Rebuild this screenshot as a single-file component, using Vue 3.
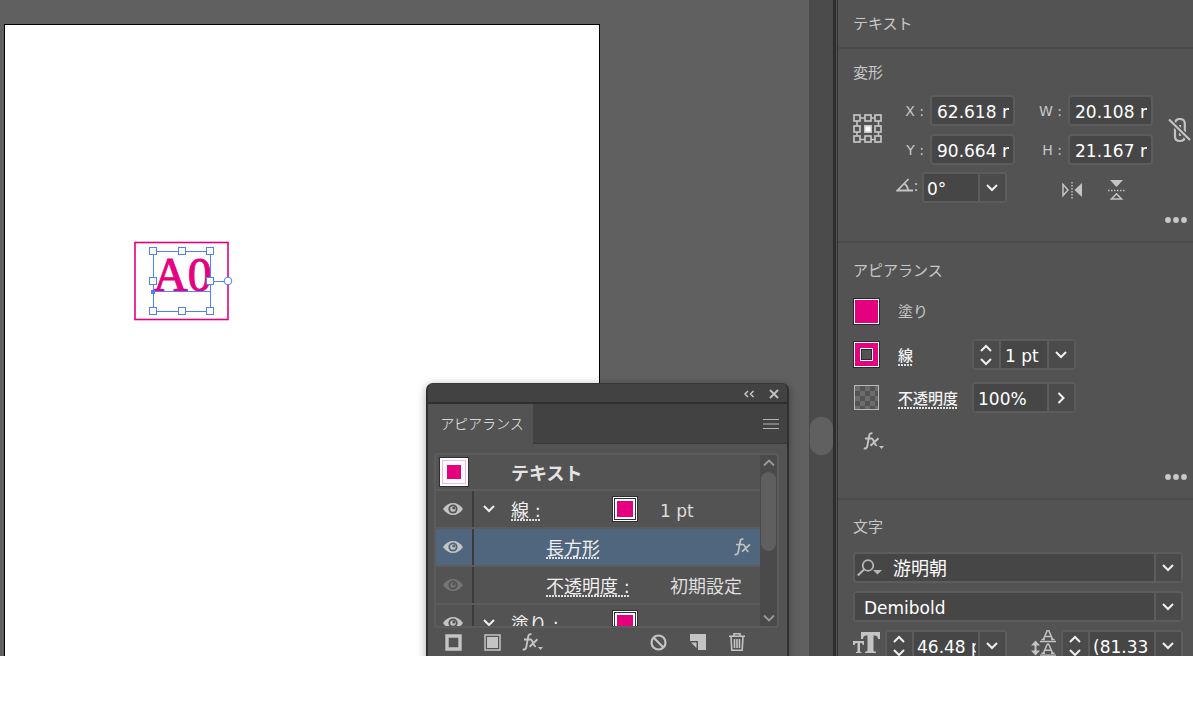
<script setup>
import { ref } from 'vue'

const posX = ref('62.618 mm')
const posY = ref('90.664 mm')
const sizeW = ref('20.108 mm')
const sizeH = ref('21.167 mm')
const angle = ref('0°')
const strokeWidth = ref('1 pt')
const opacity = ref('100%')
const fontFamily = ref('游明朝')
const fontStyle = ref('Demibold')
const fontSize = ref('46.48 pt')
const leading = ref('(81.33 pt)')

const handles = [
  [23, 11], [52, 11], [80, 11],
  [23, 41], [80, 41],
  [23, 71], [52, 71], [80, 71],
]

const anchors = [
  [1, 1], [12, 1], [22, 1],
  [1, 12], [22, 12],
  [1, 22], [12, 22], [22, 22],
]

const rows = [
  { id: 'stroke', eye: true, open: true, label: '線 :', swatch: true, value: '1 pt' },
  { id: 'rect', eye: true, nested: true, label: '長方形', selected: true, fx: true },
  { id: 'opacity', eye: true, dim: true, nested: true, label: '不透明度 :', value: '初期設定' },
  { id: 'fill', eye: true, open: true, label: '塗り :', swatch: true, plain: true },
]
</script>

<template>
  <div class="app">
    <main class="workspace">
      <div class="artboard"></div>
      <svg class="artwork" width="106" height="84" viewBox="0 0 106 84">
        <rect x="5" y="2.5" width="93" height="77" fill="none" stroke="#e4007f" stroke-width="1.6" />
        <text class="art-text" x="23" y="51">A0</text>
        <g fill="none" stroke="#4f80ff">
          <path d="M23.5 11.5H80.5V71.5H23.5Z" />
          <path d="M23 51.5H80M80 41.5H94" />
        </g>
        <rect x="21" y="50" width="4" height="4" fill="#4f80ff" />
        <rect
          v-for="h in handles"
          :key="h.join()"
          :x="h[0] - 3.5"
          :y="h[1] - 3.5"
          width="7"
          height="7"
          fill="#fff"
          stroke="#4f80ff"
        />
        <circle cx="98" cy="41" r="3.8" fill="#fff" stroke="#4f80ff" />
      </svg>

      <section class="float">
        <header class="float-bar">
          <button class="plain" aria-label="アイコン化">
            <svg width="12" height="10" viewBox="0 0 12 10" fill="none" stroke="#c8c8c8" stroke-width="1.5"><path d="M5 2 2 5l3 3M10.500 2l-3 3 3 3" /></svg>
          </button>
          <button class="plain" aria-label="閉じる">
            <svg width="10" height="10" viewBox="0 0 10 10" fill="none" stroke="#c0c0c0" stroke-width="2"><path d="M1 1l8 8M9 1 1 9" /></svg>
          </button>
        </header>
        <div class="tabs">
          <button class="tab">アピアランス</button>
          <button class="plain" aria-label="メニュー">
            <svg width="16" height="12" viewBox="0 0 16 12" stroke="#b4b4b4" stroke-width="1.2"><path d="M0 1.500h16M0 6h16M0 10.500h16" /></svg>
          </button>
        </div>
        <div class="list">
          <div class="rows">
            <div class="row head">
              <span class="thumb"><i></i></span>
              <span class="head-title">テキスト</span>
            </div>
            <div v-for="r in rows" :key="r.id" class="row" :class="{ selected: r.selected }">
              <button class="plain eye" aria-label="表示">
                <svg width="20" height="12" viewBox="0 0 20 12" :class="{ dim: r.dim }">
                  <path d="M0 6C3 1.800 6.300 0 10 0s7 1.800 10 6c-3 4.200-6.300 6-10 6S3 10.200 0 6Z" fill="#c4c4c4" />
                  <circle cx="10" cy="6" r="4.600" class="iris" />
                  <circle cx="10" cy="6" r="2.800" fill="#c4c4c4" />
                  <circle cx="10.800" cy="5.200" r="1.400" class="iris" />
                </svg>
              </button>
              <div class="cell" :class="{ nested: r.nested }">
                <button v-if="r.open" class="plain twist" aria-label="展開">
                  <svg width="12" height="8" viewBox="0 0 12 8" fill="none" stroke="#f0f0f0" stroke-width="2"><path d="M1 1l5 5 5-5" /></svg>
                </button>
                <a href="#" class="name" :class="{ dotted: !r.plain }">{{ r.label }}</a>
                <span v-if="r.swatch" class="mini"><i></i></span>
                <span v-if="r.value" class="value" :class="{ wide: r.nested }">{{ r.value }}</span>
                <svg v-if="r.fx" class="row-fx" width="18" height="20" viewBox="0 0 18 20" fill="none" stroke="#c4c4c4" stroke-width="1.700">
                  <path d="M10.500 2.300C8.800 1.500 7.600 2.300 7.200 4.500L5.300 15c-.4 2-1.400 2.900-3.600 2.400M3 7.500h7M10 7.500c2.400-.4 2.600 7.500 5.500 6.800M17 7.300 9 14.700" />
                </svg>
              </div>
            </div>
          </div>
          <div class="scroll">
            <svg width="12" height="8" viewBox="0 0 12 8" fill="none" stroke="#999" stroke-width="1.800"><path d="M1 6.500l5-5 5 5" /></svg>
            <i class="scroll-thumb"></i>
            <svg width="12" height="8" viewBox="0 0 12 8" fill="none" stroke="#999" stroke-width="1.800"><path d="M1 1.500l5 5 5-5" /></svg>
          </div>
        </div>
        <footer class="tools">
          <div class="tool-group">
            <button class="plain" aria-label="新規線を追加">
              <svg width="17" height="17" viewBox="0 0 17 17" fill="none" stroke="#c4c4c4" stroke-width="3.400"><path d="M2 2h13v13H2z" /></svg>
            </button>
            <button class="plain" aria-label="新規塗りを追加">
              <svg width="17" height="17" viewBox="0 0 17 17"><path d="M1 1h15v15H1z" fill="none" stroke="#c4c4c4" stroke-width="1.500" /><path d="M3 3h11v11H3z" fill="#c4c4c4" /></svg>
            </button>
            <button class="plain" aria-label="新規効果を追加">
              <svg width="22" height="18" viewBox="2 0 22 18" fill="none" stroke="#c4c4c4" stroke-width="1.900" overflow="visible"><path d="M10.500 1.500C8.800.700 7.600 1.500 7.200 3.700L5.300 14c-.4 2-1.400 2.900-3.600 2.400M3 6.500h7M9.500 6.500c2.400-.4 2.600 7.500 5.500 6.800M16.500 6.300l-8 7.400" /><path d="M17 14h5l-2.500 3z" fill="#c4c4c4" stroke="none" /></svg>
            </button>
          </div>
          <div class="tool-group end">
            <button class="plain" aria-label="アピアランスを消去">
              <svg width="17" height="17" viewBox="0 0 17 17" fill="none" stroke="#c4c4c4" stroke-width="2.200"><circle cx="8.500" cy="8.500" r="7" /><path d="M3.500 3.500l10 10" /></svg>
            </button>
            <button class="plain" aria-label="複製">
              <svg width="16" height="16" viewBox="0 0 16 16" fill="#c4c4c4"><path d="M0 0h16v16H8V7H0z" /><path d="M1 8.500h5.500V14z" /></svg>
            </button>
            <button class="plain" aria-label="削除">
              <svg width="16" height="18" viewBox="0 0 16 18" fill="none" stroke="#c4c4c4" stroke-width="1.600"><path d="M0 3.200h16M5 3V.8h6V3M2 3.500l.8 13.700h10.400L14 3.500M5.500 6v9M8 6v9M10.500 6v9" /></svg>
            </button>
          </div>
        </footer>
      </section>
    </main>

    <div class="gutter"><i class="gutter-thumb"></i></div>

    <aside class="props">
      <section class="sec kind"><h2>テキスト</h2></section>

      <section class="sec transform">
        <h2>変形</h2>
        <div class="geometry">
          <svg width="30" height="30" viewBox="0 0 30 30" class="anchor-grid">
            <path d="M4 4h21.500v21.500H4z" fill="none" stroke="#c4c4c4" stroke-width="1.600" />
            <rect v-for="a in anchors" :key="a.join()" :x="a[0]" :y="a[1]" width="6" height="6" fill="#535353" stroke="#c4c4c4" stroke-width="1.700" />
            <path d="M11 11h8v8h-8z" fill="#c4c4c4" />
            <path d="M12.500 12.500h5v5h-5z" fill="#fff" />
          </svg>
          <div class="fields">
            <label for="px">X :</label><input id="px" v-model="posX" class="box" />
            <label for="pw">W :</label><input id="pw" v-model="sizeW" class="box" />
            <label for="py">Y :</label><input id="py" v-model="posY" class="box" />
            <label for="ph">H :</label><input id="ph" v-model="sizeH" class="box" />
          </div>
          <button class="plain link" aria-label="縦横比を固定">
            <svg width="24" height="26" viewBox="0 0 24 26" fill="none" stroke="#c4c4c4" stroke-width="2.200">
              <path d="M7 9V6.500C7 3.500 9 2 11.800 2s5 1.500 5 4.500V15M7 11v8.500c0 3 2 4.500 4.800 4.500s5-1.500 5-4.500V18M12 8v5M12 14v5" />
              <path d="M1 2.500 22 23" stroke="#535353" stroke-width="5" />
              <path d="M1 2.500 22 23" />
            </svg>
          </button>
        </div>
        <div class="angle-row">
          <label for="ang" class="angle-label" aria-label="角度">
            <svg width="18" height="14" viewBox="0 0 18 14" fill="none" stroke="#c4c4c4" stroke-width="1.800"><path d="M12.500 1 1.500 12.500H17M8 5.500c2.500 1.500 4 4 4 7" /></svg>:
          </label>
          <div class="combo angle">
            <input id="ang" v-model="angle" />
            <button aria-label="角度を選択"><svg class="chev" viewBox="0 0 12 8"><path d="M1 1l5 5 5-5" /></svg></button>
          </div>
          <button class="plain flip-h" aria-label="水平方向に反転">
            <svg width="22" height="18" viewBox="0 0 22 18"><path d="M2 3.500v11L7 9z" fill="none" stroke="#c4c4c4" stroke-width="1.500" /><path d="M21 2v14l-7.500-7z" fill="#c4c4c4" /><path d="M11 1v17" stroke="#c4c4c4" stroke-width="1.400" stroke-dasharray="1.500 1.500" /></svg>
          </button>
          <button class="plain flip-v" aria-label="垂直方向に反転">
            <svg width="18" height="20" viewBox="0 0 18 20"><path d="M2 0h13L8.500 7z" fill="#c4c4c4" /><path d="M3.500 19h10l-5-5.200z" fill="none" stroke="#c4c4c4" stroke-width="1.600" /><path d="M0 10.500h18" stroke="#c4c4c4" stroke-width="1.400" stroke-dasharray="1.500 1.500" /></svg>
          </button>
        </div>
        <button class="plain more" aria-label="詳細オプション"><svg width="22" height="6" viewBox="0 0 22 6" fill="#c8c8c8"><circle cx="3" cy="3" r="2.900" /><circle cx="11" cy="3" r="2.900" /><circle cx="19" cy="3" r="2.900" /></svg></button>
      </section>

      <section class="sec looks">
        <h2>アピアランス</h2>
        <div class="look">
          <button class="plain swatch fill" aria-label="塗りのカラー"></button>
          <span class="look-name">塗り</span>
        </div>
        <div class="look">
          <button class="plain swatch fill" aria-label="線のカラー"><i class="hole"></i></button>
          <span class="look-name"><a href="#" class="dotted">線</a></span>
          <div class="combo small">
            <button class="spin" aria-label="線幅を増減"><svg class="chev" viewBox="0 0 12 8"><path d="M1 7l5-5 5 5" /></svg><svg class="chev" viewBox="0 0 12 8"><path d="M1 1l5 5 5-5" /></svg></button>
            <input v-model="strokeWidth" aria-label="線幅" />
            <button aria-label="線幅を選択"><svg class="chev" viewBox="0 0 12 8"><path d="M1 1l5 5 5-5" /></svg></button>
          </div>
        </div>
        <div class="look">
          <span class="swatch clear"></span>
          <span class="look-name"><a href="#" class="dotted">不透明度</a></span>
          <div class="combo small">
            <input v-model="opacity" aria-label="不透明度" />
            <button aria-label="不透明度を選択"><svg width="8" height="12" viewBox="0 0 8 12" fill="none" stroke="#f0f0f0" stroke-width="2"><path d="M1.500 1l5 5-5 5" /></svg></button>
          </div>
        </div>
        <button class="plain effect" aria-label="効果">
          <svg width="22" height="18" viewBox="0 0 22 18" fill="none" stroke="#c4c4c4" stroke-width="1.900"><path d="M10.500 1.500C8.800.700 7.600 1.500 7.200 3.700L5.300 14c-.4 2-1.400 2.900-3.600 2.400M3 6.500h7M9.500 6.500c2.400-.4 2.600 7.500 5.500 6.800M16.500 6.300l-8 7.400" /><path d="M17 14h5l-2.500 3z" fill="#c4c4c4" stroke="none" /></svg>
        </button>
        <button class="plain more" aria-label="詳細オプション"><svg width="22" height="6" viewBox="0 0 22 6" fill="#c8c8c8"><circle cx="3" cy="3" r="2.900" /><circle cx="11" cy="3" r="2.900" /><circle cx="19" cy="3" r="2.900" /></svg></button>
      </section>

      <section class="sec chars">
        <h2>文字</h2>
        <div class="combo family">
          <svg class="search" width="26" height="18" viewBox="0 0 26 18"><circle cx="11" cy="6.500" r="5.300" fill="none" stroke="#b8b8b8" stroke-width="1.700" /><path d="M7 10.500.800 16.500" stroke="#b8b8b8" stroke-width="2" /><path d="M16 11h9l-4.500 4.500z" fill="#b8b8b8" /></svg>
          <input v-model="fontFamily" aria-label="フォントファミリ" />
          <button aria-label="フォントを選択"><svg class="chev" viewBox="0 0 12 8"><path d="M1 1l5 5 5-5" /></svg></button>
        </div>
        <div class="combo style">
          <select v-model="fontStyle" aria-label="フォントスタイル"><option>Demibold</option></select>
          <span class="arrow"><svg class="chev" viewBox="0 0 12 8"><path d="M1 1l5 5 5-5" /></svg></span>
        </div>
        <div class="metrics">
          <label for="fs" aria-label="フォントサイズ">
            <svg width="28" height="22" viewBox="0 0 28 22" fill="#c4c4c4"><path d="M8 0h19v7h-2c-.3-2.500-1-3.500-3.500-3.500h-1V18c0 1.300.5 1.500 2.500 1.700V21H12v-1.300c2-.2 2.500-.4 2.500-1.700V3.500h-1C11 3.500 10.300 4.500 10 7H8z" /><path d="M0 9h11v4H9.800c-.3-1.500-.8-2-2.300-2H7v8c0 .8.300 1 1.500 1v1H3v-1c1.200 0 1.500-.2 1.500-1v-8H4c-1.500 0-2 .5-2.300 2H0z" /></svg>
          </label>
          <div class="combo num">
            <button class="spin" aria-label="サイズを増減"><svg class="chev" viewBox="0 0 12 8"><path d="M1 7l5-5 5 5" /></svg><svg class="chev" viewBox="0 0 12 8"><path d="M1 1l5 5 5-5" /></svg></button>
            <input id="fs" v-model="fontSize" />
            <button aria-label="サイズを選択"><svg class="chev" viewBox="0 0 12 8"><path d="M1 1l5 5 5-5" /></svg></button>
          </div>
          <span class="grow"></span>
          <label for="ld" aria-label="行送り">
            <svg width="26" height="26" viewBox="0 0 26 26" fill="none" stroke="#c4c4c4" stroke-width="1.500"><path d="M9 11.500h16M9 25.200h16" stroke-width="1.300" /><path d="M12.300 9.500 16.300.500h1.400L21.700 9.500M13.800 6.500h6.400M10.500 9.400h3.500M20 9.400h3.500M12.300 23.300l4-9h1.400l4 9M13.800 20.300h6.400M10.500 23.200h3.500M20 23.200h3.500" /><path d="M4.500 13v10" stroke-width="2" /><path d="M0 15.500 4.500 10.500 9 15.500zM0 20.500 4.500 25.500 9 20.500z" fill="#c4c4c4" stroke="none" /></svg>
          </label>
          <div class="combo num">
            <button class="spin" aria-label="行送りを増減"><svg class="chev" viewBox="0 0 12 8"><path d="M1 7l5-5 5 5" /></svg><svg class="chev" viewBox="0 0 12 8"><path d="M1 1l5 5 5-5" /></svg></button>
            <input id="ld" v-model="leading" />
            <button aria-label="行送りを選択"><svg class="chev" viewBox="0 0 12 8"><path d="M1 1l5 5 5-5" /></svg></button>
          </div>
        </div>
      </section>
    </aside>
  </div>
</template>

<style>
body {
  margin: 0;
  background: #fff;
}
</style>

<style scoped>
* {
  box-sizing: border-box;
}
.app {
  display: flex;
  height: calc(100vh - 64px);
  overflow: hidden;
  background: #535353;
  color: #c8c8c8;
  font-family: "DejaVu Sans", "Noto Sans CJK JP", sans-serif;
  font-size: 15px;
  line-height: 20px;
}
svg {
  display: block;
  flex: none;
}
.plain {
  display: flex;
  align-items: center;
  justify-content: center;
  padding: 0;
  border: 0;
  background: none;
}
.grow {
  flex: 1;
}

/* canvas */
.workspace {
  position: relative;
  flex: 1;
  overflow: hidden;
  background: #606060;
}
.artboard {
  position: absolute;
  left: 4px;
  top: 24px;
  bottom: -20px;
  width: 596px;
  border: 1px solid #000;
  background: #fff;
}
.artwork {
  position: absolute;
  left: 130px;
  top: 240px;
}
.art-text {
  fill: #e4007f;
  stroke: #e4007f;
  stroke-width: 1px;
  font: 48px "Liberation Serif", serif;
}

/* floating panel */
.float {
  position: absolute;
  left: 426px;
  top: 383px;
  width: 363px;
  height: 300px;
  border: 2px solid #2f2f2f;
  border-top: 1px solid #383838;
  border-radius: 7px 7px 0 0;
  background: #535353;
  box-shadow: 0 2px 8px rgba(0, 0, 0, 0.35);
  overflow: hidden;
}
.float-bar {
  display: flex;
  align-items: center;
  justify-content: flex-end;
  gap: 14px;
  height: 20px;
  padding: 2px 8px 0 0;
  border-bottom: 2px solid #2f2f2f;
  background: #424242;
}
.tabs {
  display: flex;
  justify-content: space-between;
  height: 40px;
  padding-right: 8px;
  background: linear-gradient(#3a3a3a, #3a3a3a) bottom / 100% 1px no-repeat #424242;
}
.tab {
  width: 105px;
  padding: 0 0 2px 3px;
  border: 0;
  background: #535353;
  color: #f0f0f0;
  font: 300 14px "Noto Sans CJK JP", sans-serif;
}
.list {
  display: flex;
  height: 175px;
  margin: 9px 8px 0 6px;
  border: 2px solid #5c5c5c;
  border-radius: 4px;
  overflow: hidden;
}
.rows {
  flex: 1;
  overflow: hidden;
}
.row {
  display: flex;
  align-items: stretch;
  height: 38px;
  border-bottom: 2px solid #5c5c5c;
  color: #f0f0f0;
  font-size: 18px;
  line-height: 20px;
}
.row.head {
  align-items: center;
  height: 36px;
}
.row.selected {
  background: #50667e;
  background-clip: padding-box;
}
.thumb {
  display: flex;
  width: 30px;
  height: 30px;
  margin-left: 3px;
  padding: 3px;
  border: 1px solid #2f2f2f;
  background: linear-gradient(#fff, #fff) padding-box;
}
.thumb i {
  flex: 1;
  border: 4px solid #fff;
  outline: 1px solid #f7b5d9;
  background: #e4007f;
}
.head-title {
  margin-left: 42px;
  padding-top: 3px;
  color: #e4e4e4;
  font-weight: bold;
}
.eye {
  width: 38px;
  padding-right: 2px;
  border-right: 2px solid #3c3c3c;
}
.iris {
  fill: #535353;
}
.selected .iris {
  fill: #50667e;
}
.dim {
  opacity: 0.3;
}
.cell {
  display: flex;
  flex: 1;
  align-items: center;
  padding-left: 8px;
}
.cell.nested {
  padding-left: 72px;
}
.twist {
  width: 14px;
  margin-right: 15px;
}
.name {
  padding-top: 3px;
  color: #f0f0f0;
  text-decoration: none;
  white-space: nowrap;
}
.dotted {
  background: repeating-linear-gradient(90deg, #e0e0e0 0 2px, transparent 2px 3px) bottom / 100% 2px no-repeat;
}
.cell:not(.nested) .name {
  margin-right: auto;
}
.mini {
  display: flex;
  width: 26px;
  height: 26px;
  margin-right: 22px;
  padding: 1px;
  border: 1px solid #2f2f2f;
  background: #fff;
}
.mini:last-child {
  margin-right: 122px;
}
.mini i {
  flex: 1;
  border: 1px solid #2f2f2f;
  background: #e4007f content-box;
  padding: 2px;
  box-shadow: inset 0 0 0 2px #fff;
}
.value {
  width: 100px;
  padding-top: 3px;
  color: #dedede;
  font-size: 17px;
}
.value.wide {
  width: auto;
  margin-left: auto;
  margin-right: 18px;
  font-size: 18px;
}
.row-fx {
  margin-left: auto;
  margin-right: 9px;
}
.scroll {
  display: flex;
  flex-direction: column;
  align-items: center;
  width: 17px;
  padding: 4px 0;
  background: #4a4a4a;
}
.scroll-thumb {
  width: 15px;
  height: 79px;
  margin: 5px 0 auto;
  border-radius: 8px;
  background: #5f5f5f;
}
.tools {
  display: flex;
  align-items: center;
  justify-content: space-between;
  height: 28px;
  padding: 0 42px 0 17px;
}
.tool-group {
  display: flex;
  align-items: center;
  gap: 22px;
}
.tool-group.end {
  gap: 23px;
}

/* scroll gutter */
.gutter {
  flex: none;
  width: 29px;
  padding: 417px 0 0 1px;
  border-right: 1px solid #333;
  background: linear-gradient(90deg, #4b4b4b 24px, #2e2e2e 24px 27px, #505050 27px);
}
.gutter-thumb {
  display: block;
  width: 23px;
  height: 38px;
  border-radius: 11px;
  background: #606060;
}

/* properties */
.props {
  flex: none;
  width: 355px;
}
.sec {
  padding: 14px 10px 0 15px;
  border-bottom: 2px solid #4b4b4b;
}
.kind {
  height: 49px;
}
.transform {
  height: 194px;
}
.looks {
  height: 257px;
  padding-top: 18px;
}
.chars {
  padding-top: 17px;
}
h2 {
  margin: 0;
  font-size: 15px;
  font-weight: normal;
  line-height: 20px;
}
.geometry {
  display: flex;
  align-items: flex-start;
  margin-top: 12px;
}
.anchor-grid {
  margin-top: 19px;
}
.fields {
  display: grid;
  grid-template-columns: 47px 85px 53px 85px;
  row-gap: 8px;
  align-items: center;
}
.fields label {
  padding-right: 6px;
  font-size: 14px;
  text-align: right;
}
input,
select {
  width: 100%;
  min-width: 0;
  height: 100%;
  margin: 0;
  padding: 2px 3px 0 4px;
  border: 0;
  border-radius: 0;
  outline: 0;
  background: #464646;
  color: #fff;
  font: 17px "DejaVu Sans", "Noto Sans CJK JP", sans-serif;
  appearance: none;
}
.box {
  height: 31px;
  padding-left: 5px;
  padding-right: 4px;
  border: 2px solid #5c5c5c;
  border-radius: 4px;
}
.link {
  margin: 22px 0 0 15px;
}
.angle-row {
  display: flex;
  align-items: flex-start;
  margin-top: 7px;
  padding-left: 43px;
}
.angle-label {
  display: flex;
  align-items: center;
  width: 26px;
  height: 26px;
  font-family: "Noto Sans", sans-serif;
}
.combo {
  display: flex;
  align-items: stretch;
  height: 31px;
  border: 2px solid #5c5c5c;
  border-radius: 4px;
  background: #464646;
}
.combo button,
.arrow {
  display: flex;
  flex: none;
  align-items: center;
  justify-content: center;
  width: 27px;
  padding: 0 2px 0 0;
  border: 0;
  border-left: 2px solid #5c5c5c;
  background: #4b4b4b;
}
.combo .spin {
  flex-direction: column;
  gap: 6px;
  border-left: 0;
  border-right: 2px solid #5c5c5c;
}
.chev {
  width: 12px;
  height: 8px;
  fill: none;
  stroke: #f0f0f0;
  stroke-width: 2;
}
.angle {
  width: 85px;
}
.angle input {
  padding-left: 3px;
}
.flip-h {
  margin: 9px 0 0 54px;
}
.flip-v {
  margin: 8px 0 0 25px;
}
.more {
  margin: 14px -4px 0 auto;
}
.look {
  display: flex;
  align-items: center;
  height: 31px;
  margin-bottom: 12px;
}
.looks h2 {
  margin-bottom: 15px;
}
.swatch {
  width: 27px;
  height: 27px;
  border: 1px solid #2a2a2a;
}
.fill {
  background: #e4007f;
  box-shadow: inset 0 0 0 1px #fff;
}
.hole {
  width: 13px;
  height: 13px;
  border: 1px solid #fff;
  outline: 1px solid #2a2a2a;
  outline-offset: -2px;
  background: #535353;
}
.clear {
  width: 25px;
  height: 25px;
  margin: 0 1px;
  border: 1px solid #b8b8b8;
  background: repeating-conic-gradient(#535353 0 25%, #6c6c6c 0 50%) 0 0 / 10px 10px;
}
.look-name {
  width: 74px;
  margin-left: 18px;
}
.look-name a {
  display: inline-block;
  padding-top: 2px;
  color: #f4f4f4;
  font-weight: 500;
  text-decoration: none;
}
.small {
  width: 104px;
}
.effect {
  margin-left: 9px;
  margin-top: 19px;
}
.looks .more {
  margin-top: 24px;
}
.family {
  margin-top: 15px;
  margin-bottom: 8px;
}
.search {
  margin: 5px 0 0 2px;
}
.family input {
  padding: 0 3px 2px 10px;
  font-size: 18px;
}
.style {
  display: grid;
  grid-template-columns: 1fr 27px;
  margin-bottom: 8px;
}
.style select {
  grid-area: 1 / 1 / 2 / 3;
  padding-left: 9px;
}
.style .arrow {
  grid-area: 1 / 2;
  pointer-events: none;
}
.metrics {
  display: flex;
  align-items: flex-start;
}
.metrics label {
  padding-top: 2px;
}
.metrics .grow + label {
  padding-top: 0;
}
.num {
  width: 122px;
  margin-left: 4px;
}
.num input {
  padding-left: 3px;
  padding-right: 2px;
}
</style>
